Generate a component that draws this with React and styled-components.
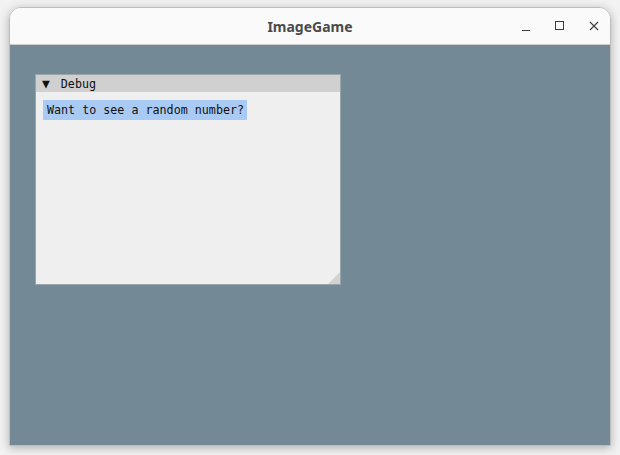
import styled, { createGlobalStyle } from "styled-components";

const Global = createGlobalStyle`
html, body {
  margin: 0;
  padding: 0;
  background: #f2f2f2;
  width: 620px;
  height: 455px;
  overflow: hidden;
}
`

const Screen = styled.div`
padding: 7px 9px 9px 9px;
`

const Frame = styled.div`
width: 602px;
height: 439px;
display: flex;
flex-direction: column;
border-radius: 12px 12px 0 0;
border: 1px solid #bdbdbd;
box-sizing: border-box;
overflow: hidden;
box-shadow: 0 2px 10px rgba(0, 0, 0, 0.28);
`

const TitleBar = styled.div`
height: 36px;
flex-shrink: 0;
background: #fafafa;
border-bottom: 1px solid #cdcdcd;
display: flex;
align-items: center;
justify-content: center;
position: relative;
font-family: "Noto Sans", sans-serif;
font-weight: 700;
font-size: 14px;
color: #4a4a4a;
`

const Controls = styled.div`
position: absolute;
right: 8px;
top: 0;
height: 100%;
display: flex;
align-items: center;
gap: 18px;
`

const Ctrl = styled.div`
width: 16px;
height: 16px;
display: flex;
align-items: center;
justify-content: center;
`

const Content = styled.div`
flex: 1;
background: #738a96;
padding: 29px 0 0 25px;
`

const DebugWin = styled.div`
width: 306px;
height: 211px;
display: flex;
flex-direction: column;
border: 1px solid #9aa5ab;
box-sizing: border-box;
background: #efefef;
position: relative;
font-family: "DejaVu Sans Mono", monospace;
font-size: 11.7px;
color: #111;
`

const DebugTitle = styled.div`
height: 17px;
background: #d0d0d0;
display: flex;
align-items: center;
padding-left: 6px;
gap: 11px;
`

const Arrow = styled.span`
font-size: 13px;
line-height: 13px;
`

const DebugBody = styled.div`
padding: 8px 0 0 7px;
`

const Selected = styled.span`
display: inline-block;
background: #a9cbf3;
padding: 4px 3px 3px 4px;
line-height: 13px;
`

const Grip = styled.div`
position: absolute;
right: 0;
bottom: 0;
width: 0;
height: 0;
border-style: solid;
border-width: 0 0 12px 12px;
border-color: transparent transparent #d2d2d2 transparent;
`

export default function App() {
  return (
    <Screen>
      <Global />
      <Frame>
        <TitleBar>
          ImageGame
          <Controls>
            <Ctrl>
              <svg width="12" height="12" viewBox="0 0 12 12">
                <path d="M2 10.5h8" stroke="#3d3d3d" strokeWidth="1" />
              </svg>
            </Ctrl>
            <Ctrl>
              <svg width="12" height="12" viewBox="0 0 12 12">
                <rect x="1.5" y="1.5" width="8" height="8" fill="none" stroke="#3d3d3d" strokeWidth="1" />
              </svg>
            </Ctrl>
            <Ctrl>
              <svg width="12" height="12" viewBox="0 0 12 12">
                <path d="M2 2l8 8M10 2l-8 8" stroke="#3d3d3d" strokeWidth="1.1" />
              </svg>
            </Ctrl>
          </Controls>
        </TitleBar>
        <Content>
          <DebugWin>
            <DebugTitle>
              <Arrow>▼</Arrow>
              Debug
            </DebugTitle>
            <DebugBody>
              <Selected>Want to see a random number?</Selected>
            </DebugBody>
            <Grip />
          </DebugWin>
        </Content>
      </Frame>
    </Screen>
  )
}
